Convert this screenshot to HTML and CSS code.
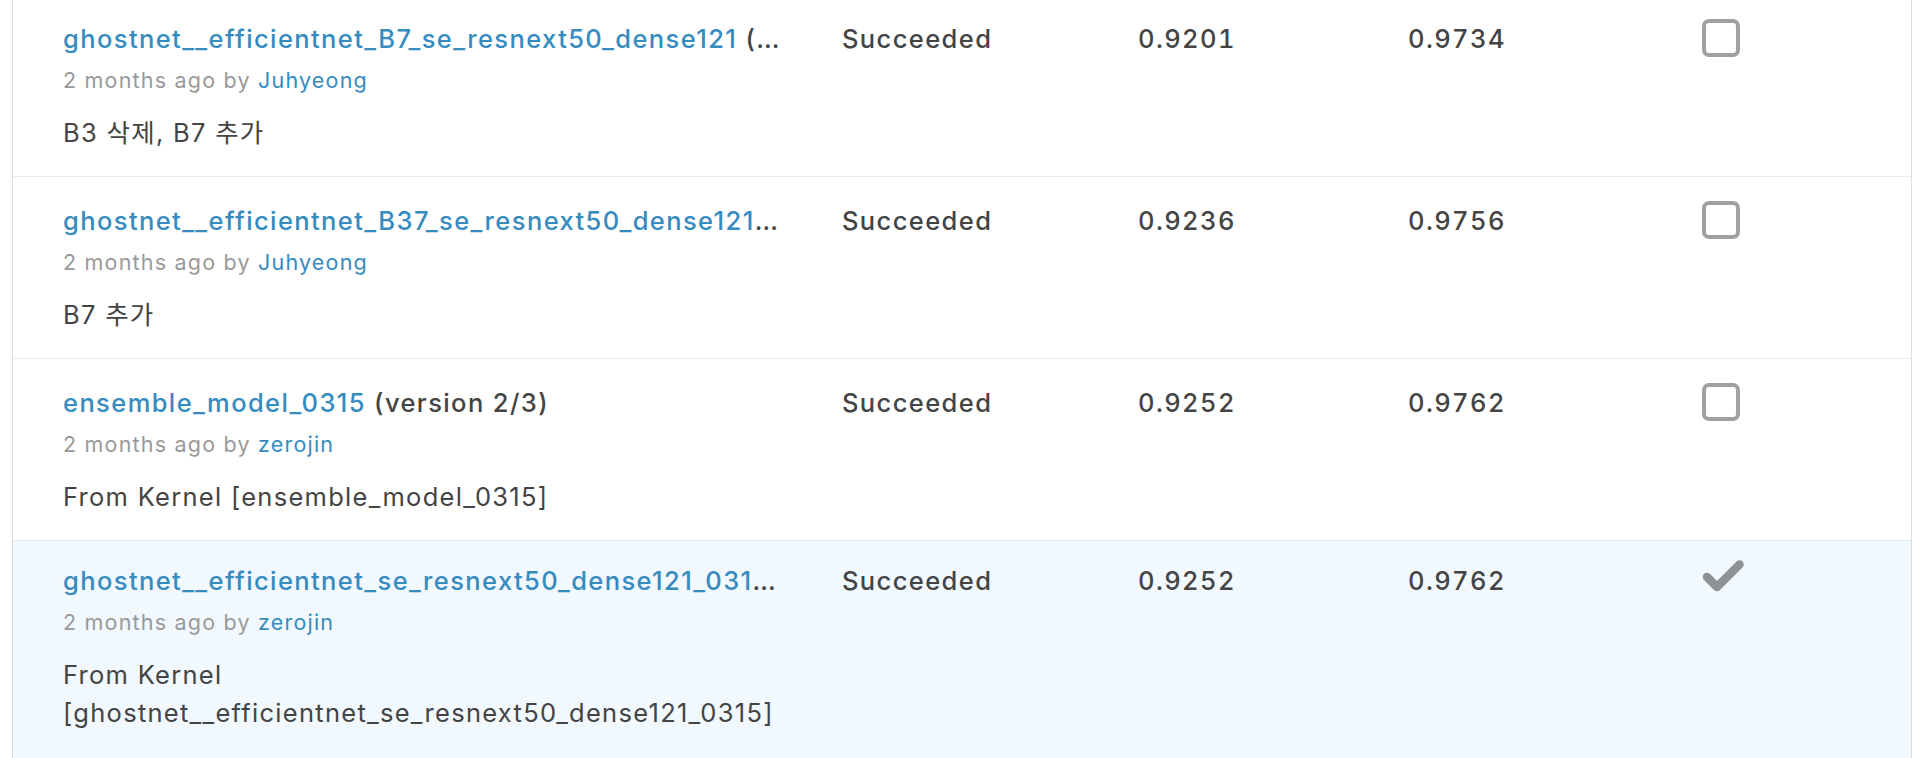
FILE: index.html
```html
<!DOCTYPE html>
<html lang="en">
<head>
<meta charset="utf-8">
<title>Submissions</title>
<link rel="stylesheet" href="styles.css">
</head>
<body>
<div class="list">
  <div class="row">
    <div class="name">
      <div class="title"><a class="link" href="#">ghostnet__efficientnet_B7_se_resnext50_dense121</a> (version 1/1)</div>
      <div class="meta">2 months ago by <a class="link" href="#">Juhyeong</a></div>
      <div class="desc">B3 삭제, B7 추가</div>
    </div>
    <div class="cell">Succeeded</div>
    <div class="cell num">0.9201</div>
    <div class="cell num">0.9734</div>
    <div class="pick"><span class="box"></span></div>
  </div>
  <div class="row">
    <div class="name">
      <div class="title"><a class="link" href="#">ghostnet__efficientnet_B37_se_resnext50_dense121_0315</a> (version 1/1)</div>
      <div class="meta">2 months ago by <a class="link" href="#">Juhyeong</a></div>
      <div class="desc">B7 추가</div>
    </div>
    <div class="cell">Succeeded</div>
    <div class="cell num">0.9236</div>
    <div class="cell num">0.9756</div>
    <div class="pick"><span class="box"></span></div>
  </div>
  <div class="row">
    <div class="name">
      <div class="title"><a class="link" href="#">ensemble_model_0315</a> (version 2/3)</div>
      <div class="meta">2 months ago by <a class="link" href="#">zerojin</a></div>
      <div class="desc">From Kernel [ensemble_model_0315]</div>
    </div>
    <div class="cell">Succeeded</div>
    <div class="cell num">0.9252</div>
    <div class="cell num">0.9762</div>
    <div class="pick"><span class="box"></span></div>
  </div>
  <div class="row selected">
    <div class="name">
      <div class="title"><a class="link" href="#">ghostnet__efficientnet_se_resnext50_dense121_0315</a> (version 1/3)</div>
      <div class="meta">2 months ago by <a class="link" href="#">zerojin</a></div>
      <div class="desc">From Kernel [ghostnet__efficientnet_se_resnext50_dense121_0315]</div>
    </div>
    <div class="cell">Succeeded</div>
    <div class="cell num">0.9252</div>
    <div class="cell num">0.9762</div>
    <div class="pick">
      <svg class="check" width="42" height="34" viewBox="0 0 42 34"><polyline points="5,18 15,28 37.5,5.5" fill="none" stroke="#8f9294" stroke-width="8.5" stroke-linecap="round" stroke-linejoin="round"/></svg>
    </div>
  </div>
</div>
</body>
</html>
```
FILE: styles.css
```css
html, body {
  margin: 0;
  padding: 0;
  background: #ffffff;
}
body {
  font-family: Inter, "Noto Sans CJK KR", sans-serif;
  color: #444444;
  overflow: hidden;
}
.list {
  margin: -6px 0 0 12px;
  width: 1898px;
  border-left: 1px solid #dedede;
  border-right: 1px solid #dedede;
}
.row {
  display: grid;
  grid-template-columns: 779px 296px 270px 294px 1fr;
  padding: 26px 0 24px 50px;
  border-top: 1px solid #ebebeb;
  background: #ffffff;
}
.row.selected {
  background: #f1f8fe;
  border-top-color: #e0e7ee;
  padding-top: 22px;
  padding-bottom: 60px;
}
.name {
  padding-right: 62px;
  min-width: 0;
}
.title {
  font-size: 25.5px;
  line-height: 36px;
  font-weight: 500;
  letter-spacing: 1.4px;
  white-space: nowrap;
  overflow: hidden;
  text-overflow: ellipsis;
  color: #444444;
}
.link {
  color: #368bbf;
  text-decoration: none;
}
.meta {
  margin-top: 8px;
  font-size: 21.5px;
  line-height: 30px;
  letter-spacing: 1.2px;
  color: #999999;
}
.desc {
  margin-top: 19px;
  margin-right: -24px;
  font-size: 25.5px;
  line-height: 38px;
  letter-spacing: 1.28px;
  color: #444444;
  overflow-wrap: break-word;
}
.cell {
  font-size: 25.5px;
  line-height: 36px;
  font-weight: 500;
  letter-spacing: 1.4px;
  color: #444444;
}
.num {
  font-variant-numeric: tabular-nums;
}
.pick {
  display: flex;
  align-items: flex-start;
}
.box {
  display: block;
  width: 38px;
  height: 38px;
  box-sizing: border-box;
  border: 4px solid #a0a0a0;
  border-radius: 7px;
  margin-top: -2px;
  background: #ffffff;
}
.check {
  display: block;
  margin-top: -4px;
}
```
